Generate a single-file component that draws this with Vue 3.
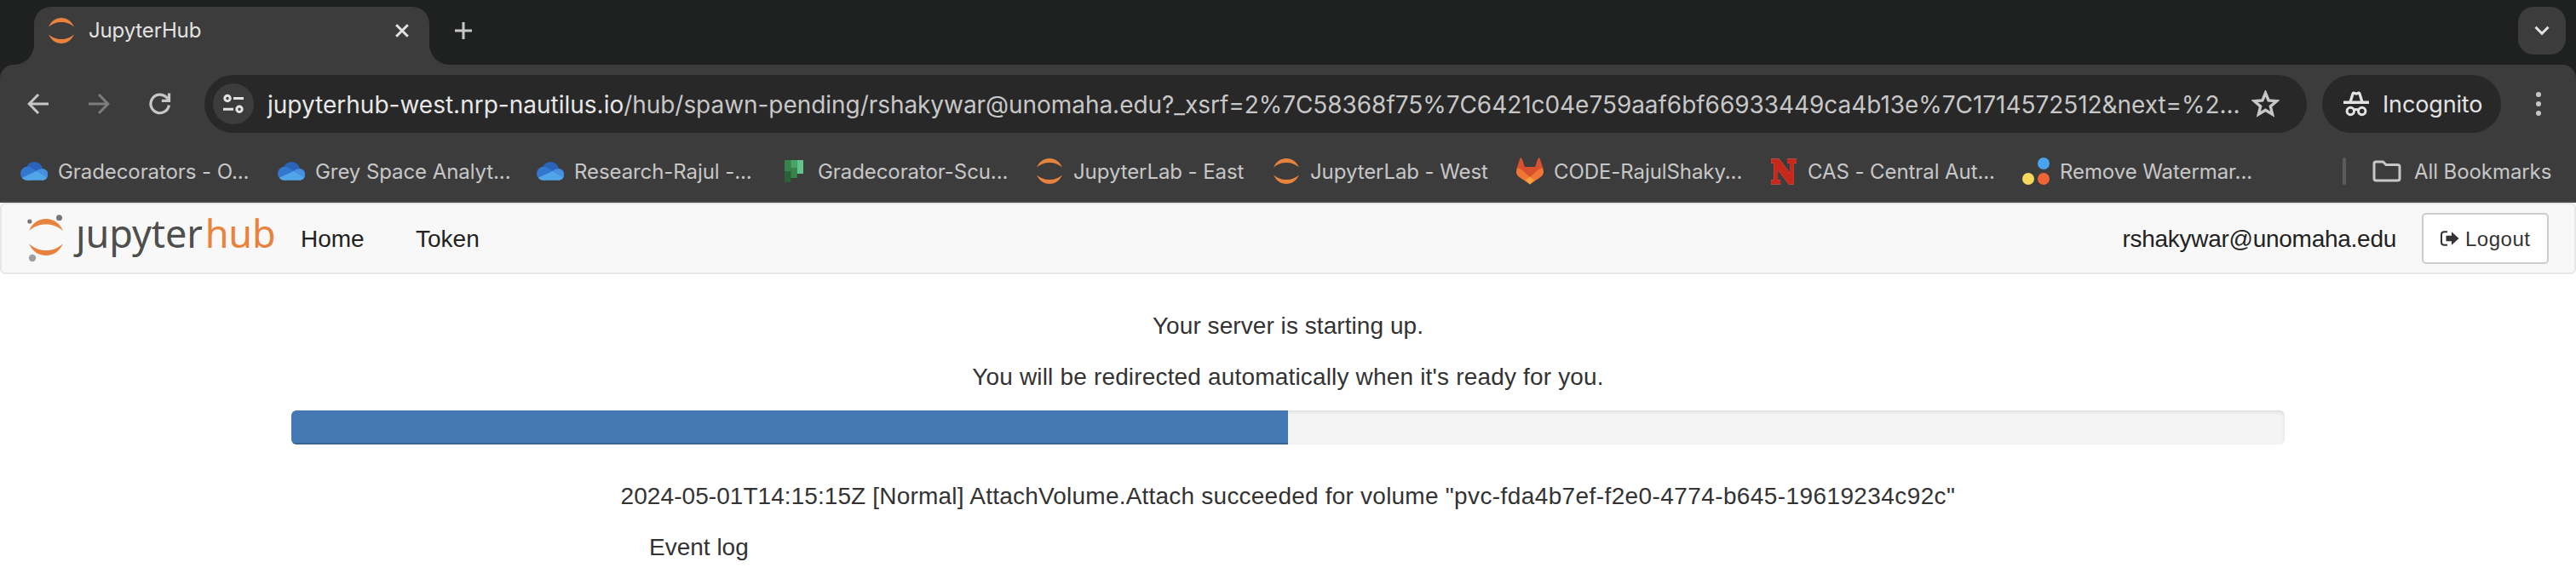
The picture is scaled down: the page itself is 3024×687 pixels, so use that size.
<script setup>
const bookmarks = [
  { icon: 'cloud', label: 'Gradecorators - O...' },
  { icon: 'cloud', label: 'Grey Space Analyt...' },
  { icon: 'cloud', label: 'Research-Rajul -...' },
  { icon: 'planner', label: 'Gradecorator-Scu...' },
  { icon: 'jupyter', label: 'JupyterLab - East' },
  { icon: 'jupyter', label: 'JupyterLab - West' },
  { icon: 'gitlab', label: 'CODE-RajulShaky...' },
  { icon: 'nebraska', label: 'CAS - Central Aut...' },
  { icon: 'dots', label: 'Remove Watermar...' },
]
const progress = 50
</script>

<template>
  <div class="window">
    <div class="tabstrip">
      <i class="flare left"></i>
      <div class="tab">
        <svg class="favicon" viewBox="0 0 30 30"><path d="M0 10.5C3 4 8.5 0 15 0S27 4 30 10.5C26 7 21 5 15 5S4 7 0 10.5ZM0 19.5C3 26 8.5 30 15 30S27 26 30 19.5C26 23 21 25 15 25S4 23 0 19.5Z" fill="#e8833d" /></svg>
        <span class="tab-title">JupyterHub</span>
        <svg class="close" viewBox="0 0 16 16"><path d="M1.2 1.2 14.8 14.8M14.8 1.2 1.2 14.8" stroke="#e3e3e3" stroke-width="3" /></svg>
      </div>
      <i class="flare right"></i>
      <svg class="plus" viewBox="0 0 20 20"><path d="M10 0V20M0 10H20" stroke="#c7c7c7" stroke-width="3" /></svg>
      <div class="tab-search"><svg width="18" height="12" viewBox="0 0 18 12"><path d="M1.5 1.8 9 9.3 16.5 1.8" fill="none" stroke="#e3e3e3" stroke-width="3" /></svg></div>
    </div>

    <div class="toolbar">
      <svg class="nav-icon" viewBox="0 0 26 26"><path d="M25 13H3M13 2 2.2 13 13 24" fill="none" stroke="#c7c7c7" stroke-width="3" /></svg>
      <svg class="nav-icon forward" viewBox="0 0 26 26"><path d="M1 13H23M13 2 23.8 13 13 24" fill="none" stroke="#7c7c7c" stroke-width="3" /></svg>
      <svg class="nav-icon reload" viewBox="0 0 26 26"><path d="M23.4 14.5A10.800 10.800 0 1 1 20.300 5.200L23 8" fill="none" stroke="#c7c7c7" stroke-width="3.2" /><path d="M23.500 .5V9.400H14.800" fill="none" stroke="#c7c7c7" stroke-width="3.2" /></svg>
      <div class="omnibox">
        <div class="site-info"><svg width="24" height="24" viewBox="0 0 24 24"><g fill="none" stroke="#e3e3e3" stroke-width="3"><circle cx="5" cy="5.5" r="3.2" /><path d="M12 5.5H24M0 18.3H12" /><circle cx="19" cy="18.3" r="3.2" /></g></svg></div>
        <span class="url"><b>jupyterhub-west.nrp-nautilus.io</b>/hub/spawn-pending/rshakywar@unomaha.edu?_xsrf=2%7C58368f75%7C6421c04e759aaf6bf66933449ca4b13e%7C1714572512&amp;next=%2...</span>
        <svg class="star" viewBox="1 1 31 30"><path d="M16.5 4 19.9 12.2 28.8 12.9 22 18.7 24.1 27.4 16.5 22.8 8.9 27.4 11 18.7 4.2 12.9 13.1 12.2Z" fill="none" stroke="#c7c7c7" stroke-width="3.2" /></svg>
      </div>
      <div class="incognito">
        <svg width="30" height="30" viewBox="0 0 30 30"><path d="M0 11.5H30V15H0ZM6.5 12 9.6 2.2Q10.4 0 12.6.6L15 1.4 17.4.6Q19.6 0 20.4 2.2L23.5 12H20L17.6 4 15 4.8 12.4 4 10 12Z" fill="#e3e3e3" /><g fill="none" stroke="#e3e3e3" stroke-width="3"><circle cx="8.3" cy="23.5" r="4.2" /><circle cx="21.7" cy="23.5" r="4.2" /><path d="M12 22.5Q15 20.5 18 22.5" /></g></svg>
        <span>Incognito</span>
      </div>
      <svg class="menu" viewBox="0 0 6 28"><g fill="#c7c7c7"><circle cx="3" cy="3" r="3" /><circle cx="3" cy="14" r="3" /><circle cx="3" cy="25" r="3" /></g></svg>
    </div>

    <div class="bookmarks">
      <div v-for="b in bookmarks" :key="b.label" class="bookmark">
        <svg v-if="b.icon === 'cloud'" class="bm-icon" viewBox="0 0 32 32">
          <circle cx="16.3" cy="14.800" r="9.800" fill="#2a63b8" />
          <path d="M8 10.800Q10.500 10.800 12.500 12L20 16.500 12 26.800H8A8 8 0 0 1 8 10.800Z" fill="#3377d1" />
          <path d="M18.500 15.800Q22.500 12.900 25.500 13A6.900 6.900 0 0 1 25.500 26.800L17 22Z" fill="#448fe0" />
          <path d="M18.800 16 31 23.800Q29.300 26.800 25.500 26.800H8Q4 26.800 1.800 23.800Z" fill="#52a5e6" />
        </svg>
        <svg v-else-if="b.icon === 'planner'" class="bm-icon" viewBox="0 0 32 32"><path d="M5 3h7.300v13H5z" fill="#35854b" /><path d="M5 16h7.300v13H5z" fill="#2a6139" /><path d="M12.300 3h7.400v9h-7.400z" fill="#4aa468" /><path d="M12.300 12h7.400v12h-7.400z" fill="#35854b" /><path d="M19.700 3H27v16h-7.300z" fill="#63c38a" /></svg>
        <svg v-else-if="b.icon === 'jupyter'" class="bm-icon" viewBox="-1 -1 32 32"><path d="M0 10.500C3 4 8.500 0 15 0S27 4 30 10.500C26 7 21 5 15 5S4 7 0 10.500ZM0 19.500C3 26 8.500 30 15 30S27 26 30 19.500C26 23 21 25 15 25S4 23 0 19.500Z" fill="#e8833d" /></svg>
        <svg v-else-if="b.icon === 'gitlab'" class="bm-icon" viewBox="0 0 32 32"><path d="M4.500.5Q5.800-.3 6.500 1.200L10 11H22L25.500 1.200Q26.300-.3 27.500.5L31.500 13 16 31 .5 13Z" fill="#d9502f" /><path d="M.8 12.500C4 12.500 7 14.500 10.500 18L21.500 18C25 14.500 28 12.500 31.200 12.500 33 18 31.500 20.500 28.500 23L16 31.500 3.500 23C.5 20.500-1 18 .8 12.500Z" fill="#ef7636" /><path d="M10.500 18 16 13.500 21.500 18 16 23Z" fill="#d9502f" /><path d="M10.800 26.500 16 22.500 21.200 26.500 16 31.500Z" fill="#f5a340" /></svg>
        <svg v-else-if="b.icon === 'nebraska'" class="bm-icon n-logo" viewBox="0 0 32 32"><text class="n-mark" x="1" y="29.800" textLength="30" lengthAdjust="spacingAndGlyphs">N</text></svg>
        <svg v-else class="bm-icon" viewBox="0 0 32 32"><circle cx="25" cy="7" r="7" fill="#4aa3ef" /><circle cx="7" cy="25" r="7" fill="#f6d95b" /><circle cx="25" cy="25" r="7" fill="#ee6437" /></svg>
        <span>{{ b.label }}</span>
      </div>
      <i class="separator"></i>
      <svg class="folder" viewBox="0 0 34 26"><path d="M4 2H12.500L16 5.500H29.500Q32 5.500 32 8V21.500Q32 24 29.500 24H4.500Q2 24 2 21.500V4Q2 2 4 2Z" fill="none" stroke="#c7c7c7" stroke-width="3" /></svg>
      <span class="all">All Bookmarks</span>
    </div>

    <nav class="navbar">
      <div class="logo">
        <svg width="46" height="56" viewBox="0 0 46 56"><path d="M3 19C7 10 14 5 23 5S39 10 43 19C37 14 31 11.500 23 11.500S9 14 3 19ZM3 34C7 43 14 48 23 48S39 43 43 34C37 39.500 31 42 23 42S9 39.500 3 34Z" fill="#e8833d" /><circle cx="3.800" cy="8" r="2.600" fill="#767677" /><circle cx="38.500" cy="3.700" r="3.500" fill="#767677" /><circle cx="7" cy="51" r="4.200" fill="#9e9e9e" /></svg>
        <span class="word">ȷupyter<span class="hub">hub</span></span>
      </div>
      <a class="home">Home</a>
      <a class="token">Token</a>
      <span class="user">rshakywar@unomaha.edu</span>
      <button class="logout">
        <svg width="22" height="18" viewBox="0 0 22 18"><path d="M8 1.200H4.500Q1 1.200 1 4.500V13.500Q1 16.800 4.500 16.800H8" fill="none" stroke="#333" stroke-width="2" /><path d="M6.500 5.800H13V1.200L21.500 9 13 16.800V12.200H6.500Z" fill="#333" /></svg>
        <span>Logout</span>
      </button>
    </nav>

    <main class="content">
      <p class="status">Your server is starting up.</p>
      <p class="redirect">You will be redirected automatically when it's ready for you.</p>
      <div class="progress"><div class="bar" :style="{ width: progress + '%' }"></div></div>
      <p class="event"><span class="time">2024-05-01T14:15:15Z</span> [Normal] AttachVolume.Attach succeeded for volume <span class="volume">"pvc-fda4b7ef-f2e0-4774-b645-19619234c92c"</span></p>
      <p class="log">Event log</p>
    </main>
  </div>
</template>

<style>
body { background: #fff; }
</style>
<style scoped>
.window { width: 3024px; height: 687px; overflow: hidden; background: linear-gradient(#1f2120 0 120px, #fff 120px); font-family: Inter, sans-serif; color: #c7c7c7; white-space: nowrap; }
.window svg { display: block; flex: none; }
.tabstrip { height: 76px; box-sizing: border-box; display: flex; align-items: flex-end; padding-left: 16px; background: #1f2120; }
.flare { width: 24px; height: 24px; flex: none; }
.flare.left { background: radial-gradient(circle at 0 0, transparent 23.5px, #3c3c3c 24.5px); }
.flare.right { background: radial-gradient(circle at 100% 0, transparent 23.5px, #3c3c3c 24.5px); }
.tab { width: 464px; height: 68px; box-sizing: border-box; padding: 13px 24px 0 17px; display: flex; border-radius: 20px 20px 0 0; background: #3c3c3c; }
.favicon { width: 30px; height: 30px; }
.tab-title { flex: 1; margin-left: 17px; font-size: 24px; line-height: 30px; letter-spacing: -0.15px; color: #e3e3e3; }
.close { width: 16px; height: 16px; margin-top: 7px; }
.plus { width: 20px; height: 20px; margin: 0 0 30px 6px; }
.tab-search { width: 56px; height: 56px; margin: 0 12px 12px auto; border-radius: 18px; background: #3c3c3c; display: flex; align-items: center; justify-content: center; }
.toolbar { height: 92px; box-sizing: border-box; padding: 0 41px 0 32px; display: flex; align-items: center; background: #3c3c3c; border-radius: 16px 16px 0 0; }
.nav-icon { width: 26px; height: 26px; }
.nav-icon.forward { margin-left: 45px; }
.nav-icon.reload { margin-left: 46px; }
.omnibox { width: 2468px; height: 68px; box-sizing: border-box; margin-left: 39px; padding: 0 32px 0 10px; display: flex; align-items: center; background: #282828; border-radius: 34px; }
.site-info { width: 48px; height: 48px; flex: none; border-radius: 50%; background: #3c3c3c; display: flex; align-items: center; justify-content: center; }
.url { margin-left: 16px; padding-top: 1px; font-size: 28px; line-height: 40px; letter-spacing: -0.052px; }
.url b { font-weight: 400; letter-spacing: 0; color: #e8e8e8; }
.star { width: 33px; height: 32px; margin-left: auto; }
.incognito { width: 210px; height: 68px; box-sizing: border-box; margin-left: 18px; padding-left: 25px; display: flex; align-items: center; gap: 16px; border-radius: 34px; background: #282828; color: #e3e3e3; font-size: 27px; letter-spacing: -0.15px; }
.incognito span { padding-top: 1px; }
.menu { width: 6px; height: 28px; margin-left: auto; }
.bookmarks { height: 70px; box-sizing: border-box; padding: 0 0 2px 24px; display: grid; grid-template-columns: 302px 304px 286px 300px 278px 286px 298px 296px 376px 35px 49px auto; align-items: center; background: #3c3c3c; border-bottom: 2px solid #464646; font-size: 24px; letter-spacing: -0.08px; }
.bookmark { display: flex; align-items: center; gap: 12px; }
.bm-icon { width: 32px; height: 32px; }
.n-logo { overflow: visible; filter: drop-shadow(0 0 .5px #f0b0a8); }
.n-mark { font: bold 38px "DejaVu Serif", serif; letter-spacing: 0; fill: #c8281b; stroke: #c8281b; stroke-width: 3; }
.separator { width: 4px; height: 32px; border-radius: 2px; background: #5c5c5c; }
.folder { width: 34px; height: 26px; }
.navbar { height: 84px; box-sizing: border-box; display: flex; align-items: center; padding: 0 30px 0 29px; border: 2px solid #e7e7e7; border-radius: 6px; background: #f8f8f8; color: #222; font-family: "Liberation Sans", Arial, sans-serif; font-size: 28px; }
.logo { width: 322px; display: flex; align-items: flex-start; }
.word { margin-left: 12px; font: 45px/43px "Noto Sans", sans-serif; letter-spacing: -0.1px; color: #4e4e4e; }
.hub { color: #e8833d; margin-left: 3px; letter-spacing: -0.1px; }
.home, .token, .user { padding-top: 2px; }
.home { width: 135px; }
.user { margin-left: auto; letter-spacing: -0.27px; }
.logout { width: 149px; height: 60px; box-sizing: border-box; margin-left: 30px; padding: 0 0 0 20px; display: flex; align-items: center; gap: 7px; border: 2px solid #ccc; border-radius: 5px; background: #fff; font: 24px "Liberation Sans", Arial, sans-serif; letter-spacing: 0.5px; color: #333; }
.logout span { padding-top: 1px; }
.content { padding: 40px 342px 0; font: 28px/42px "Liberation Sans", Arial, sans-serif; color: #333; text-align: center; }
.content p { margin: 0 0 18px; }
.status { letter-spacing: 0.06px; }
.redirect { letter-spacing: 0.17px; }
.event { letter-spacing: 0.22px; }
.time { letter-spacing: 0.06px; }
.volume { letter-spacing: 0.4px; }
.progress { height: 40px; margin-bottom: 40px; overflow: hidden; border-radius: 6px; background: #f4f4f4; box-shadow: inset 0 2px 4px rgba(0, 0, 0, .1); }
.bar { height: 100%; background: #4478b2; box-shadow: inset 0 -2px 0 rgba(0, 0, 0, .15); }
.content .log { text-align: left; padding-left: 420px; }
</style>
